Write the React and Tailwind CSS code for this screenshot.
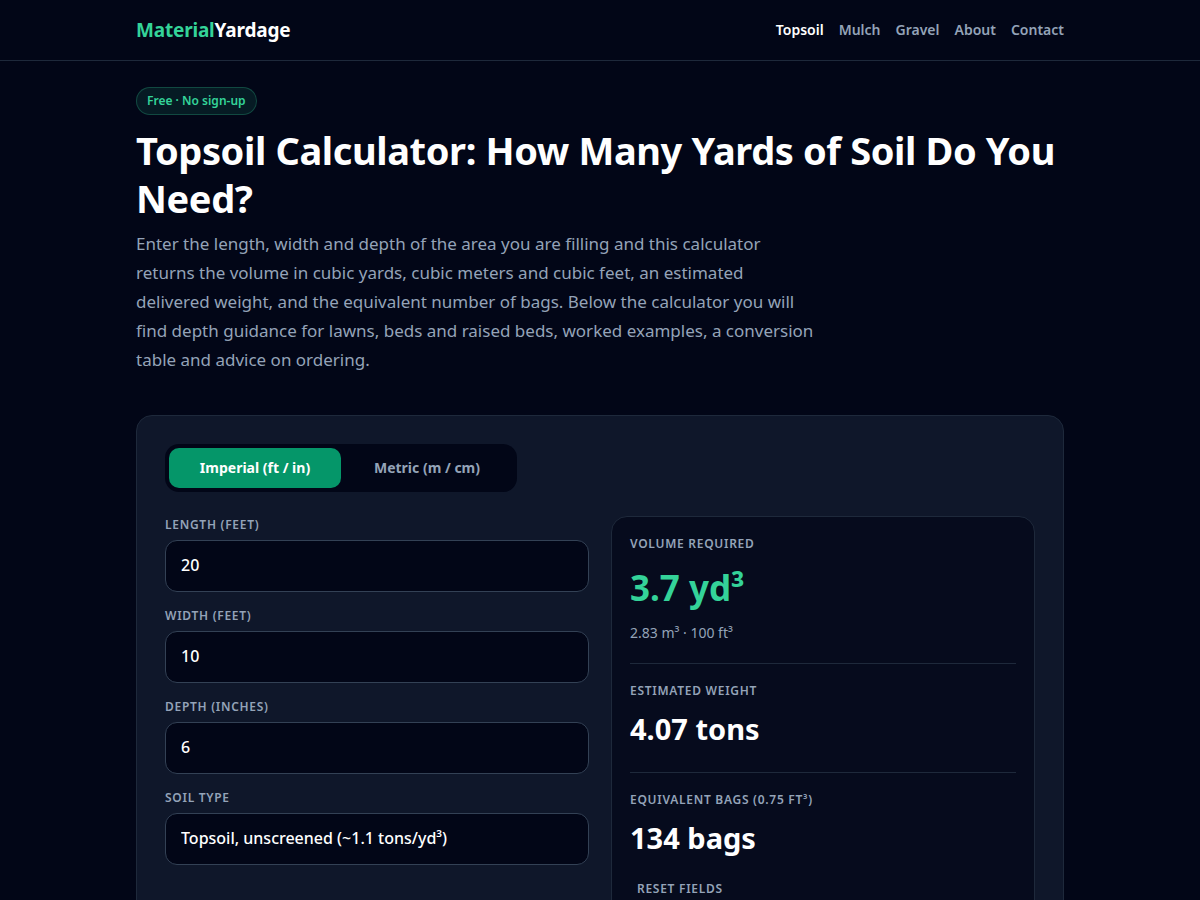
import { useState } from "react";

const navItems = ["Topsoil", "Mulch", "Gravel", "About", "Contact"];

const labelClass =
  "text-[12px] leading-[17px] font-semibold uppercase tracking-[0.06em] text-[#94a3b8]";
const fieldClass =
  "block w-full h-[52px] appearance-none rounded-xl border border-[#334155] bg-[#020617] px-[15px] pb-0.5 text-[16px] font-medium text-white outline-none focus:border-[#34d399]";

const soils = [
  { name: "Topsoil, unscreened (~1.1 tons/yd³)", density: 1.1 },
  { name: "Topsoil, screened (~1.0 tons/yd³)", density: 1 },
  { name: "Garden mix (~0.9 tons/yd³)", density: 0.9 },
];

function NumberField({ id, label, value, onChange }) {
  return (
    <div className="flex flex-col gap-[7px]">
      <label htmlFor={id} className={labelClass}>{label}</label>
      <input
        id={id}
        type="text"
        inputMode="decimal"
        value={value}
        onChange={(e) => onChange(e.target.value)}
        className={fieldClass}
      />
    </div>
  );
}

export default function App() {
  const [metric, setMetric] = useState(false);
  const [length, setLength] = useState("20");
  const [width, setWidth] = useState("10");
  const [depth, setDepth] = useState("6");
  const [soil, setSoil] = useState(0);

  const l = parseFloat(length) || 0;
  const w = parseFloat(width) || 0;
  const d = parseFloat(depth) || 0;
  const cubicFeet = metric ? (l * w * d * 35.3147) / 100 : (l * w * d) / 12;
  const yards = cubicFeet / 27;
  const meters = cubicFeet / 35.3147;
  const tons = yards * soils[soil].density;
  const bags = Math.ceil(cubicFeet / 0.75);
  const round = (n) => String(Math.round(n * 100) / 100);

  const reset = () => {
    setLength("");
    setWidth("");
    setDepth("");
  };

  const tab = "h-10 flex-1 rounded-[10px] pb-0.5 text-[14px] font-bold";

  return (
    <div className="min-h-screen overflow-x-hidden bg-[#020617] font-['Noto_Sans',sans-serif] text-white">
      <header className="border-b border-[#1e293b]">
        <div className="mx-auto flex h-[60px] max-w-[960px] items-center justify-between px-4">
          <a href="#home" className="text-[19px] font-bold tracking-[-0.01em]">
            <span className="text-[#34d399]">Material</span>Yardage
          </a>
          <nav className="flex gap-[15px] pb-0.5 text-[14px] font-semibold">
            {navItems.map((item, i) => (
              <a
                key={item}
                href={`#${item.toLowerCase()}`}
                className={i === 0 ? "text-white" : "text-[#94a3b8]"}
              >
                {item}
              </a>
            ))}
          </nav>
        </div>
      </header>

      <main className="mx-auto max-w-[960px] px-4 pt-[26px] pb-12">
        <span className="flex h-7 w-fit items-center rounded-full border border-[#34d399]/25 bg-[#34d399]/10 px-[10px] text-[12px] font-semibold text-[#34d399]">
          Free · No sign-up
        </span>
        <h1 className="mt-[11px] text-[38px] leading-[48px] font-bold tracking-[-0.01em]">
          Topsoil Calculator: How Many Yards of Soil Do You Need?
        </h1>
        <p className="mt-[7px] max-w-[680px] text-[17px] leading-[29px] text-[#94a3b8]">
          Enter the length, width and depth of the area you are filling and this calculator returns
          the volume in cubic yards, cubic meters and cubic feet, an estimated delivered weight, and
          the equivalent number of bags. Below the calculator you will find depth guidance for
          lawns, beds and raised beds, worked examples, a conversion table and advice on ordering.
        </p>

        <section className="mt-[41px] rounded-2xl border border-[#1e293b] bg-[#0f172a] p-7">
          <div className="flex max-w-[352px] rounded-[14px] bg-[#020617] p-1">
            <button
              type="button"
              onClick={() => setMetric(false)}
              className={`${tab} ${metric ? "text-[#94a3b8]" : "bg-[#059669] text-white"}`}
            >
              Imperial (ft / in)
            </button>
            <button
              type="button"
              onClick={() => setMetric(true)}
              className={`${tab} ${metric ? "bg-[#059669] text-white" : "text-[#94a3b8]"}`}
            >
              Metric (m / cm)
            </button>
          </div>

          <div className="mt-6 grid gap-[22px] md:grid-cols-2">
            <div className="flex flex-col gap-[15px]">
              <NumberField id="length" label={metric ? "Length (meters)" : "Length (feet)"} value={length} onChange={setLength} />
              <NumberField id="width" label={metric ? "Width (meters)" : "Width (feet)"} value={width} onChange={setWidth} />
              <NumberField id="depth" label={metric ? "Depth (cm)" : "Depth (inches)"} value={depth} onChange={setDepth} />
              <div className="flex flex-col gap-[7px]">
                <label htmlFor="soil" className={labelClass}>Soil type</label>
                <select
                  id="soil"
                  value={soil}
                  onChange={(e) => setSoil(Number(e.target.value))}
                  className={fieldClass}
                >
                  {soils.map((s, i) => (
                    <option key={s.name} value={i}>{s.name}</option>
                  ))}
                </select>
              </div>
            </div>

            <div className="rounded-2xl border border-[#1e293b] bg-[#060b1d] p-[18px]">
              <div className="border-b border-[#1e293b] pb-[18px]">
                <h2 className={labelClass}>Volume required</h2>
                <p className="mt-2 text-[35px] leading-[56px] font-bold text-[#34d399]">{round(yards)} yd³</p>
                <p className="mt-1 text-[14px] leading-[25px] text-[#94a3b8]">
                  {round(meters)} m³ · {round(cubicFeet)} ft³
                </p>
              </div>
              <div className="border-b border-[#1e293b] pt-[18px] pb-5">
                <h2 className={labelClass}>Estimated weight</h2>
                <p className="mt-[7px] text-[29px] leading-[46px] font-bold">{round(tons)} tons</p>
              </div>
              <div className="pt-[18px]">
                <h2 className={labelClass}>Equivalent bags (0.75 ft³)</h2>
                <p className="mt-[7px] text-[29px] leading-[46px] font-bold">{bags} bags</p>
              </div>
              <button type="button" onClick={reset} className={`${labelClass} mt-[19px] px-[7px]`}>
                Reset fields
              </button>
            </div>
          </div>
        </section>
      </main>
    </div>
  );
}
